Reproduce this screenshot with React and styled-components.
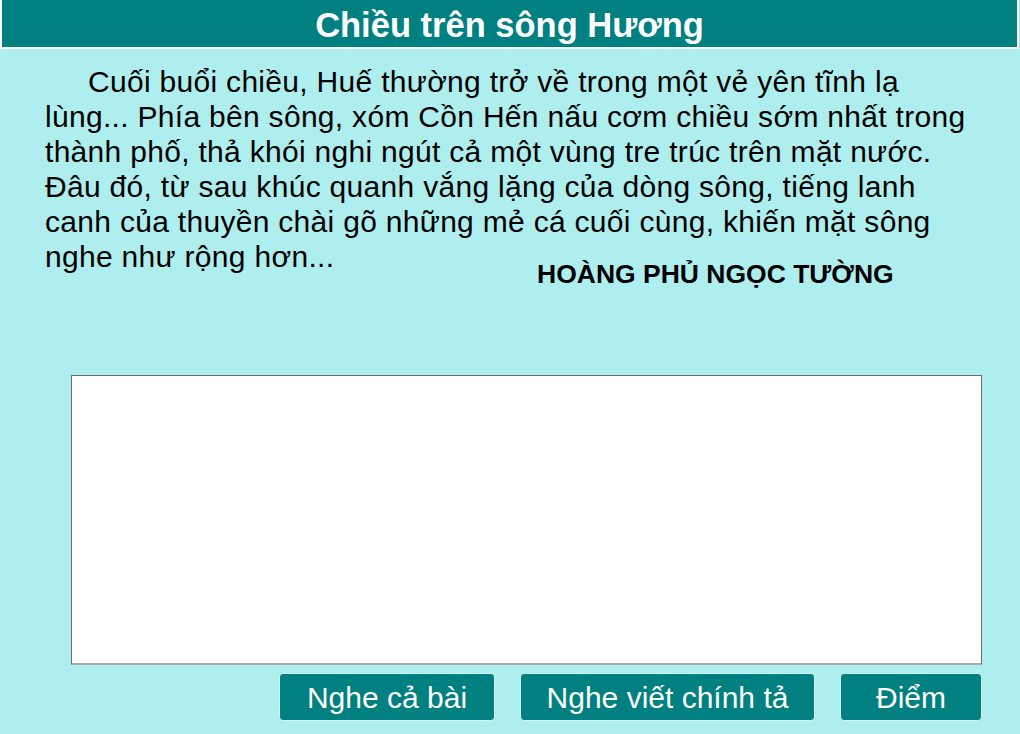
import React from 'react'
import styled, { createGlobalStyle } from 'styled-components'

const GlobalStyle = createGlobalStyle`
	html, body {
		margin: 0;
		padding: 0;
		background: #afeeee;
		font-family: 'Liberation Sans', Arial, sans-serif;
	}
`

const Page = styled.div`
	width: 1020px;
	height: 734px;
	overflow: hidden;
	background: #afeeee;
`

const Header = styled.h1`
	box-sizing: border-box;
	width: 1019px;
	height: 49px;
	margin: 0;
	padding-top: 3px;
	background: #008080;
	border: 2px solid #ffffff;
	border-top: none;
	color: #ffffff;
	font-size: 34.5px;
	font-weight: bold;
	line-height: 44px;
	text-align: center;
`

const Reading = styled.div`
	width: 925px;
	padding: 15px 0 0 45px;
`

const Passage = styled.p`
	margin: 0;
	font-size: 30px;
	line-height: 35px;
	letter-spacing: 0.3px;
	text-indent: 43px;
	color: #000;
`

const Author = styled.div`
	margin-top: -17px;
	padding-left: 492px;
	font-size: 26.5px;
	font-weight: bold;
	line-height: 34px;
	white-space: nowrap;
	color: #000;
`

const Work = styled.div`
	display: flex;
	flex-direction: column;
	align-items: flex-end;
	width: 911px;
	margin: 84px 0 0 71px;
	gap: 8px;
`

const Answer = styled.textarea`
	box-sizing: border-box;
	display: block;
	width: 911px;
	height: 290px;
	margin: 0;
	padding: 6px;
	resize: none;
	background: #ffffff;
	border: 1px solid #6b6b6b;
	border-bottom: 2px solid #a8a8a8;
	font-family: 'Liberation Sans', Arial, sans-serif;
	font-size: 24px;
	outline: none;
`

const Buttons = styled.div`
	display: flex;
	gap: 25px;
`

const Button = styled.button`
	box-sizing: border-box;
	width: ${(p) => p.$w}px;
	height: 48px;
	padding: 2px 0 0;
	background: #008080;
	border: 1px solid #d6f6f6;
	border-radius: 4px;
	color: #ffffff;
	font-family: 'Liberation Sans', Arial, sans-serif;
	font-size: 30px;
	line-height: 44px;
	cursor: pointer;
`

const App = () => {
	return (
		<React.Fragment>
			<GlobalStyle />
			<Page>
				<Header>Chiều trên sông Hương</Header>
				<Reading>
					<Passage>
						Cuối buổi chiều, Huế thường trở về trong một vẻ yên tĩnh lạ lùng... Phía bên sông, xóm Cồn
						Hến nấu cơm chiều sớm nhất trong thành phố, thả khói nghi ngút cả một vùng tre trúc trên mặt
						nước. Đâu đó, từ sau khúc quanh vắng lặng của dòng sông, tiếng lanh canh của thuyền chài gõ
						những mẻ cá cuối cùng, khiến mặt sông nghe như rộng hơn...
					</Passage>
					<Author>HOÀNG PHỦ NGỌC TƯỜNG</Author>
				</Reading>
				<Work>
					<Answer />
					<Buttons>
						<Button $w={216}>Nghe cả bài</Button>
						<Button $w={295}>Nghe viết chính tả</Button>
						<Button $w={142}>Điểm</Button>
					</Buttons>
				</Work>
			</Page>
		</React.Fragment>
	)
}

export default App
